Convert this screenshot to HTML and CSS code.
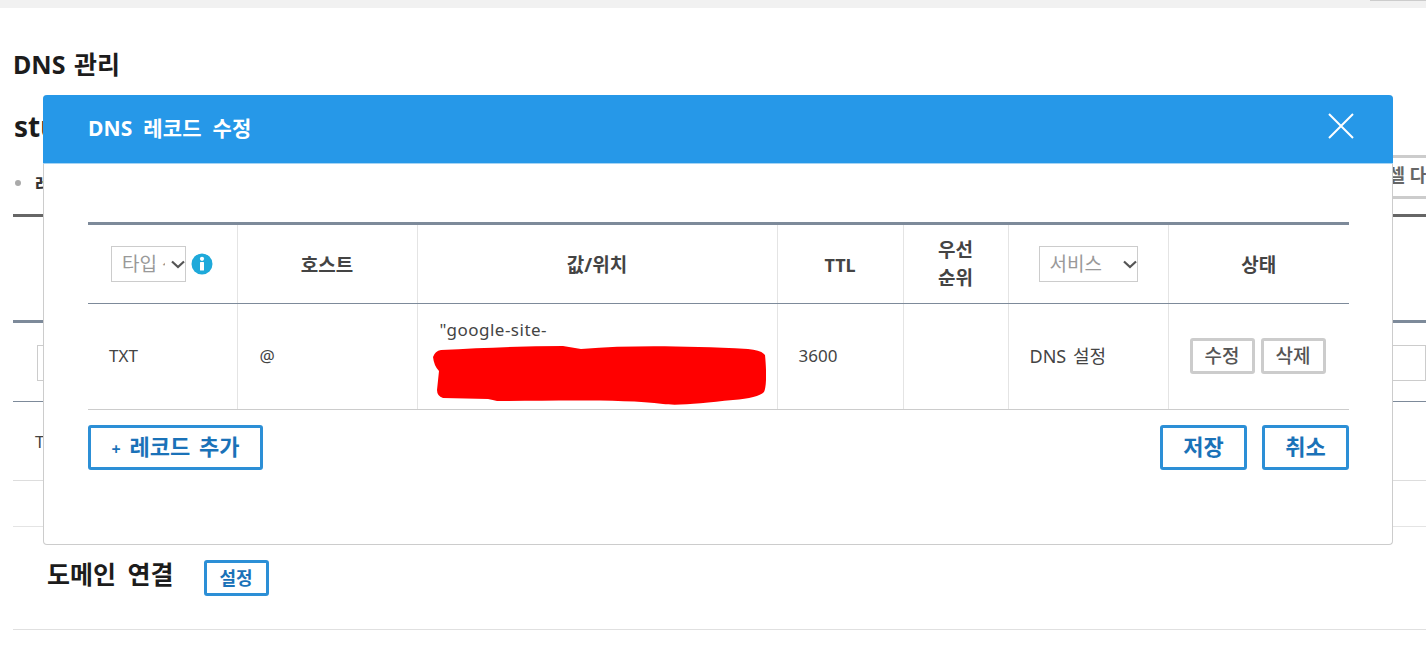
FILE: index.html
```html
<!DOCTYPE html>
<html lang="ko">
<head>
<meta charset="utf-8">
<title>DNS 관리</title>
<link rel="stylesheet" href="styles.css">
</head>
<body>
<div class="topbar"><span class="topbar-tab"></span></div>
<main class="page">
  <h1 class="page-title">DNS 관리</h1>
  <h2 class="domain-name">studio</h2>
  <div class="tabs">
    <span class="tab-dot"></span><span class="tab-label">레코드 관리</span>
    <button class="excel-btn">엑셀 다운로드</button>
  </div>
  <div class="bg-spacer"></div>
  <div class="bg-filter"><span class="bg-select"></span><span class="bg-input"></span></div>
  <div class="bg-row">TXT</div>
  <div class="bg-empty"></div>
  <div class="connect">
    <h3 class="connect-title">도메인 연결</h3>
    <button class="blue-btn small">설정</button>
  </div>
</main>

<section class="modal">
  <header class="modal-head">
    <span class="modal-title">DNS 레코드 수정</span>
    <svg class="close-icon" viewBox="0 0 26 26"><path d="M1 1 L25 25 M25 1 L1 25"/></svg>
  </header>
  <div class="modal-body">
    <table class="records">
      <colgroup>
        <col class="c1"><col class="c2"><col class="c3"><col class="c4"><col class="c5"><col class="c6"><col class="c7">
      </colgroup>
      <thead>
        <tr>
          <th>
            <div class="type-head">
              <span class="select-wrap type-wrap">
                <select class="filter"><option>타입 선택</option></select>
                <svg class="chevron" viewBox="0 0 14 9"><path d="M1 1.5 L7 7 L13 1.5"/></svg>
              </span>
              <svg class="info-icon" viewBox="0 0 22 22"><circle cx="11" cy="11" r="10.5"/><rect x="9" y="9" width="4" height="8.5" rx=".5"/><circle cx="11" cy="5.8" r="2.1"/></svg>
            </div>
          </th>
          <th class="label">호스트</th>
          <th class="label">값/위치</th>
          <th class="label latin">TTL</th>
          <th>우선<br>순위</th>
          <th>
            <span class="select-wrap service-wrap">
              <select class="filter"><option>서비스</option></select>
              <svg class="chevron" viewBox="0 0 14 9"><path d="M1 1.5 L7 7 L13 1.5"/></svg>
            </span>
          </th>
          <th class="label">상태</th>
        </tr>
      </thead>
      <tbody>
        <tr>
          <td>TXT</td>
          <td class="host-cell">@</td>
          <td class="value-cell">
            <div class="value-text">"google-site-</div>
            <svg class="redact" viewBox="0 0 333 60"><path d="M0 11 Q2 5 8 4 C50 2 90 0 130 0 L148 3 C200 -1 250 0 315 3 Q328 4 332 9 C334 30 333 42 331 46 Q325 52 300 54 C270 57 245 60 230 58 C190 53 120 55 64 55 Q60 54 55 53 L10 52 Q4 50 4 44 L6 25 Q1 20 0 11 Z"/></svg>
          </td>
          <td>3600</td>
          <td></td>
          <td class="service-cell">DNS 설정</td>
          <td class="actions"><button class="grey-btn">수정</button><button class="grey-btn">삭제</button></td>
        </tr>
      </tbody>
    </table>
    <div class="modal-actions">
      <button class="blue-btn add"><span class="plus">+</span> 레코드 추가</button>
      <div class="right-actions">
        <button class="blue-btn wide">저장</button>
        <button class="blue-btn wide">취소</button>
      </div>
    </div>
  </div>
</section>
</body>
</html>
```

FILE: styles.css
```css
* { box-sizing: border-box; }
html, body { margin: 0; height: 652px; overflow: hidden; background: #fff; }
body { font-family: "Noto Sans", "Noto Sans CJK KR", sans-serif; color: #444; position: relative; }
button { font-family: inherit; cursor: pointer; background: #fff; }

.topbar { height: 8px; background: #f1f1f1; position: relative; }
.topbar-tab { position: absolute; right: 0; top: 0; width: 56px; height: 1px; background: #ccc; }

.page { padding: 0 0 0 13px; }
.page-title { margin: 0; padding-top: 39px; height: 92px; font-size: 25px; font-weight: 700; line-height: 34px; color: #1c1c1c; padding-left: 0; word-spacing: 2px; }
.domain-name { margin: 0; height: 55px; font-size: 28px; line-height: 52px; font-weight: 700; color: #1c1c1c; padding-left: 1px; }
.tabs { display: flex; align-items: center; height: 62px; border-bottom: 3px solid #666; position: relative; padding-bottom: 4px; }
.tab-dot { width: 6px; height: 6px; border-radius: 50%; background: #aaa; margin-right: 14px; margin-left: 2px; }
.tab-label { font-size: 18px; font-weight: 700; color: #333; }
.excel-btn { position: absolute; left: 1348px; top: 0; width: 65px; height: 44px; border: 3px solid #ccc; border-right: 0; font-size: 18px; font-weight: 700; color: #666; text-align: left; padding: 0 0 6px 8px; white-space: nowrap; overflow: hidden; }
.bg-spacer { height: 106px; border-bottom: 3px solid #7d8a9a; }
.bg-filter { height: 79px; padding-top: 22px; border-bottom: 1px solid #7d8a9a; display: flex; }
.bg-select { width: 1000px; height: 36px; border: 1px solid #ccc; margin-left: 24px; }
.bg-input { flex: 1; height: 36px; border: 1px solid #ccc; }
.bg-row { height: 79px; font-size: 17px; color: #444; padding: 28px 0 0 22px; border-bottom: 1px solid #ddd; }
.bg-empty { height: 46px; border-bottom: 1px solid #e4e4e4; }
.connect { height: 103px; display: flex; align-items: flex-start; padding: 33px 0 0 34px; border-bottom: 1px solid #e0e0e0; }
.connect-title { margin: -2px 30px 0 0; font-size: 25px; line-height: 32px; font-weight: 700; color: #1c1c1c; word-spacing: 5px; }

.blue-btn { border: 3px solid #2c8fd6; border-radius: 3px; color: #1a72b8; font-weight: 700; padding: 0; }
.blue-btn.small { width: 65px; height: 36px; font-size: 18px; padding-bottom: 3px; }
.blue-btn.add { width: 175px; height: 45px; font-size: 22px; word-spacing: 3px; padding-bottom: 5px; }
.blue-btn.wide { width: 87px; height: 45px; font-size: 22px; padding-bottom: 5px; }
.plus { font-size: 16px; margin-right: 0; }

.modal { position: absolute; left: 43px; top: 95px; width: 1350px; height: 450px; background: #fff; border: 1px solid #ccc; border-top: 0; border-radius: 4px; }
.modal-head { height: 69px; margin: 0 -1px; background: #2698e8; border-bottom: 1px solid #a6d4f4; border-radius: 4px 4px 0 0; display: flex; align-items: center; justify-content: space-between; padding: 0 39px 6px 45px; }
.modal-title { font-size: 21px; font-weight: 700; color: #fff; position: relative; top: 1px; word-spacing: 5px; letter-spacing: .2px; }
.close-icon { width: 26px; height: 26px; fill: none; stroke: #fff; stroke-width: 2; }
.modal-body { padding: 58px 43px 0 44px; }

.records { width: 1261px; border-collapse: collapse; table-layout: fixed; border-top: 3px solid #7d8a9a; font-size: 17px; }
.c1 { width: 149px; } .c2 { width: 180px; } .c3 { width: 360px; } .c4 { width: 126px; } .c5 { width: 105px; } .c6 { width: 160px; } .c7 { width: 181px; }
.records th { height: 80px; border-bottom: 1px solid #7d8a9a; border-left: 1px solid #e4e4e4; font-size: 19px; line-height: 28px; font-weight: 700; color: #444; text-align: center; padding: 0; }
.records th.label { padding-top: 2px; }
.records th.latin { font-size: 18px; }
.records td { height: 106px; border-bottom: 1px solid #ccc; border-left: 1px solid #e4e4e4; padding: 0 0 2px 21px; color: #444; }
.records th:first-child, .records td:first-child { border-left: 0; }
.type-head { display: flex; align-items: center; gap: 5px; padding-left: 23px; }
.select-wrap { position: relative; display: inline-block; vertical-align: middle; }
.type-wrap { width: 75px; }
.service-wrap { width: 99px; }
.filter { display: block; width: 100%; height: 36px; border: 1px solid #ccc; background: #fff; font-family: inherit; font-size: 19px; color: #999; padding: 0 20px 0 10px; border-radius: 0; appearance: none; }
.chevron { position: absolute; right: 1px; top: 14px; width: 14px; height: 9px; fill: none; stroke: #555; stroke-width: 2.2; pointer-events: none; }
.info-icon { width: 22px; height: 22px; flex: none; fill: #fff; }
.info-icon circle:first-child { fill: #1ea9da; }
.host-cell.host-cell { padding-left: 22px; }
.value-cell.value-cell { padding: 13px 0 0 22px; vertical-align: top; }
.value-text { line-height: 26px; white-space: nowrap; letter-spacing: .5px; }
.redact { display: block; width: 333px; height: 60px; fill: #f00; margin: 3px 0 0 -7px; }
.service-cell.service-cell { font-size: 18px; word-spacing: 2px; padding-bottom: 3px; }
.actions.actions { padding: 0 0 0 21px; white-space: nowrap; }
.grey-btn { width: 65px; height: 36px; border: 3px solid #ccc; border-radius: 3px; font-size: 19px; font-weight: 500; color: #555; padding: 0 0 3px; margin-right: 6px; position: relative; top: -1px; }

.modal-actions { display: flex; justify-content: space-between; padding-top: 15px; }
.right-actions { display: flex; gap: 15px; }
```
